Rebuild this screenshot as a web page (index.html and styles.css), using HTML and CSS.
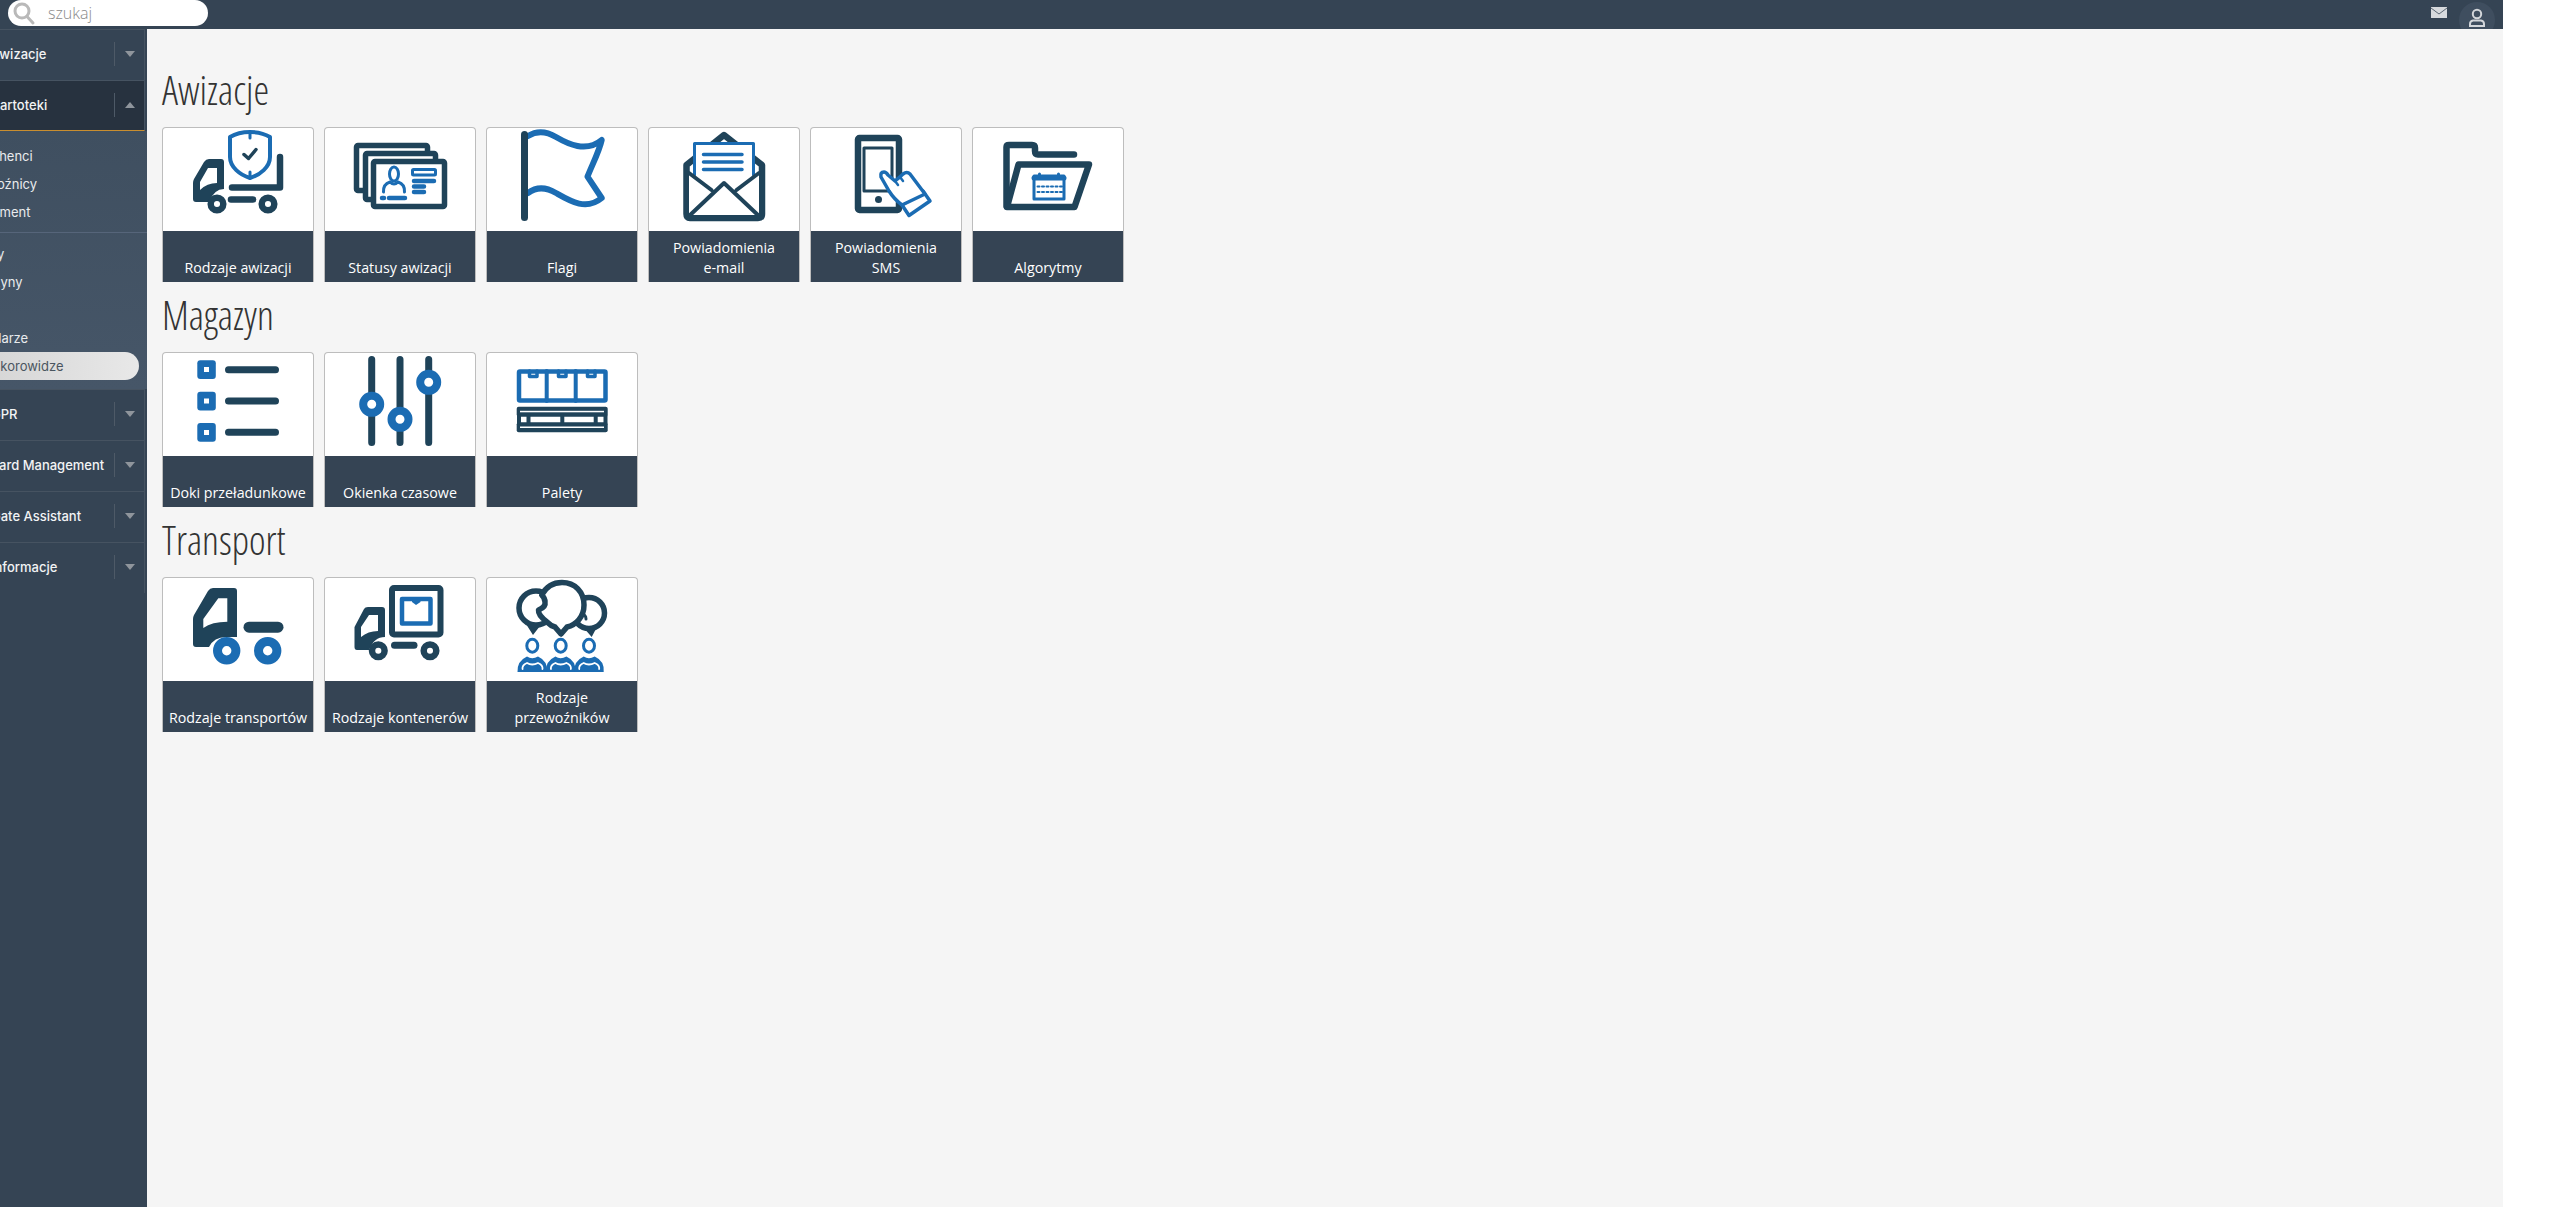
FILE: index.html
```html
<!DOCTYPE html>
<html lang="pl">

<head>
    <meta charset="UTF-8">
    <meta name="viewport" content="width=device-width, initial-scale=1.0">
    <title>Skorowidze</title>
    <link rel="stylesheet" href="styles.css">
</head>

<body>
    <div class="app">
        <header class="topbar">
            <div class="search">
                <svg class="search-icon" width="30" height="26" viewBox="0 0 30 26">
                    <circle cx="14" cy="11" r="7" />
                    <path d="M19 16.5 L25 23" />
                </svg>
                <input class="search-input" type="text" placeholder="szukaj">
            </div>
            <div class="topbar-right">
                <svg class="mail-icon" width="16" height="11" viewBox="0 0 16 11">
                    <rect width="16" height="11" />
                    <path d="M0 1 L8 7 L16 1" />
                </svg>
                <div class="avatar">
                    <svg width="20" height="20" viewBox="0 0 20 20">
                        <circle cx="10" cy="6" r="4.2" />
                        <path d="M3 18 V16 Q3 13 6 12.5 H14 Q17 13 17 16 V18 Z" />
                    </svg>
                </div>
            </div>
        </header>

        <div class="layout">
            <nav class="sidebar">
                <div class="nav-head">
                    <span class="nav-label">Awizacje</span>
                    <span class="nav-toggle"><i class="caret"></i></span>
                </div>
                <div class="nav-head active">
                    <span class="nav-label">Kartoteki</span>
                    <span class="nav-toggle"><i class="caret up"></i></span>
                </div>
                <div class="nav-sub">
                    <div class="nav-group">
                        <a class="nav-item">Kontrahenci</a>
                        <a class="nav-item">Przewoźnicy</a>
                        <a class="nav-item">Asortyment</a>
                    </div>
                    <div class="nav-group">
                        <a class="nav-item">Towary</a>
                        <a class="nav-item">Magazyny</a>
                        <a class="nav-item">Auta</a>
                        <a class="nav-item">Kalendarze</a>
                        <a class="nav-item current">Skorowidze</a>
                    </div>
                </div>
                <div class="nav-head">
                    <span class="nav-label">GPR</span>
                    <span class="nav-toggle"><i class="caret"></i></span>
                </div>
                <div class="nav-head">
                    <span class="nav-label">Yard Management</span>
                    <span class="nav-toggle"><i class="caret"></i></span>
                </div>
                <div class="nav-head">
                    <span class="nav-label">Gate Assistant</span>
                    <span class="nav-toggle"><i class="caret"></i></span>
                </div>
                <div class="nav-head">
                    <span class="nav-label">Informacje</span>
                    <span class="nav-toggle"><i class="caret"></i></span>
                </div>
            </nav>

            <main class="content">
                <section class="section">
                    <h1>Awizacje</h1>
                    <div class="tiles">
                        <a class="tile">
                            <svg class="tile-icon" viewBox="1 1 150 103">
                                <path class="df" d="M31 56 Q31 54 32 52 L42 35 Q44 32 47 32 H59 Q62 32 62 35 V62 Q52 62 47 75 H34 Q31 75 31 72Z" />
                                <path class="wf" d="M38 63 V55 L46 41 H55 V56 Q45 56 38 63Z" />
                                <path class="d" stroke-width="6.5" d="M118 30 V60.5 H70" />
                                <path class="b wf" stroke-width="4" d="M88 5 C96 5 103 7 108 10 V30 C108 40 98 48 88 51 C78 48 68 40 68 30 V10 C73 7 80 5 88 5Z" />
                                <path class="b" stroke-width="3" d="M88 5 V11 M88 45 V51" />
                                <path class="d" stroke-width="3.5" d="M82 27.5 L86.5 31.5 L94 22.5" />
                                <circle class="d" stroke-width="6.5" cx="55" cy="77" r="6.3" />
                                <circle class="d" stroke-width="6.5" cx="106" cy="77" r="6.3" />
                                <path class="d" stroke-width="6.5" d="M69 72.5 H91" />
                            </svg>
                            <span class="tile-label">Rodzaje awizacji</span>
                        </a>
                        <a class="tile">
                            <svg class="tile-icon" viewBox="1 1 150 103">
                                <rect class="d wf" stroke-width="5.5" x="32.5" y="18.5" width="71" height="45" rx="1.5" />
                                <rect class="d wf" stroke-width="5.5" x="41.5" y="26.5" width="70" height="46" rx="1.5" />
                                <rect class="d wf" stroke-width="5.5" x="49.5" y="34.5" width="71" height="45" rx="1.5" />
                                <ellipse class="b" stroke-width="3" cx="70" cy="47" rx="4.5" ry="7" />
                                <path class="b" stroke-width="3" d="M59.5 65 C59 58 63 56 66 55 Q70 59 74 55 C77 56 81 58 80.5 65" />
                                <rect class="b" stroke-width="3" x="88.5" y="42.5" width="23" height="5.5" rx="1" />
                                <path class="b" stroke-width="4.5" d="M90 54 H110 M90 59.5 H100 M90 65 H100 M58 71 H60 M65 71 H81" />
                            </svg>
                            <span class="tile-label">Statusy awizacji</span>
                        </a>
                        <a class="tile">
                            <svg class="tile-icon" viewBox="1 1 150 103">
                                <path class="b" stroke-width="6" d="M42 9 C50 4 60 4 70 10 C82 17 100 26 115.7 13 C113 25 106 38 101.5 49.7 L115.7 71 C100 84 84 74 70 66 C60 60 50 60 42 66" />
                                <path class="d" stroke-width="7" d="M38.5 7.5 V90.5" />
                            </svg>
                            <span class="tile-label">Flagi</span>
                        </a>
                        <a class="tile">
                            <svg class="tile-icon" viewBox="1 1 150 103">
                                <path class="d" stroke-width="6.5" d="M38.5 87 Q38.5 91 42 91 H110 Q114 91 114 87 V38 L76 8 L38.5 38 Z" />
                                <path class="b wf" stroke-width="3" d="M46.5 48 V16.5 H105.5 V48" />
                                <path class="b" stroke-width="3.5" stroke-linecap="butt" d="M55.5 27.5 H94 M55.5 35 H94 M55.5 42.5 H94" />
                                <path class="wf" d="M41 46 L76 70 L111 46 V88 H41Z" />
                                <path class="d" stroke-width="4" d="M40 90 L76 56 L112 90 M41 46 L63.5 63 M111 46 L88.5 63" />
                            </svg>
                            <span class="tile-label">Powiadomienia<br>e-mail</span>
                        </a>
                        <a class="tile">
                            <svg class="tile-icon" viewBox="1 1 150 103">
                                <rect class="d" stroke-width="6.5" x="48" y="11" width="41" height="72" rx="1.5" />
                                <rect class="d" stroke-width="3" x="54" y="21" width="28" height="43" />
                                <circle class="df" cx="68.5" cy="72.5" r="3.5" />
                                <path class="b wf" stroke-width="3.5" d="M92 78 L113 64 L120 74 L99 88.5Z" />
                                <path class="b wf" stroke-width="3.5" d="M71 50 Q70 45 74 45 Q76 45 78 48 L85 54 Q90 50 93 47 Q97 44 100 47 L115 67 L92 78 Q84 72 79 64Z" />
                                <path class="b" stroke-width="2.5" d="M85 54 L88 58 M90 50 L93 54" />
                            </svg>
                            <span class="tile-label">Powiadomienia<br>SMS</span>
                        </a>
                        <a class="tile">
                            <svg class="tile-icon" viewBox="1 1 150 103">
                                <path class="d" stroke-width="6.5" d="M34.5 79 V20 Q34.5 18 37 18 H60 Q63 18 63 21 V24 Q63 27.5 66 27.5 H102" />
                                <path class="d wf" stroke-width="6.5" d="M46.5 37.5 H117 L102.5 80 H35 Z" />
                                <rect class="b" stroke-width="3" x="62" y="49" width="30" height="23" />
                                <path class="b" stroke-width="5" stroke-linecap="butt" d="M62 51 H92" />
                                <path class="b" stroke-width="3" d="M67.5 47 V50 M86.5 47 V50" />
                                <path class="b" stroke-width="2" stroke-linecap="butt" stroke-dasharray="2 2.5" d="M65.5 59.5 H90 M65.5 65 H90" />
                            </svg>
                            <span class="tile-label">Algorytmy</span>
                        </a>
                    </div>
                </section>

                <section class="section">
                    <h1>Magazyn</h1>
                    <div class="tiles">
                        <a class="tile">
                            <svg class="tile-icon" viewBox="1 1 150 103">
                                <rect class="bf" x="35.3" y="8.3" width="18.5" height="18.7" rx="3" />
                                <rect class="bf" x="35.3" y="39.7" width="18.5" height="18.7" rx="3" />
                                <rect class="bf" x="35.3" y="71" width="18.5" height="18.7" rx="3" />
                                <rect class="wf" x="42" y="15" width="5" height="5" />
                                <rect class="wf" x="42" y="46.5" width="5" height="5" />
                                <rect class="wf" x="42" y="78" width="5" height="5" />
                                <path class="d" stroke-width="7" d="M66.5 17.7 H113.5 M66.5 49 H113.5 M66.5 80.3 H113.5" />
                            </svg>
                            <span class="tile-label">Doki przeładunkowe</span>
                        </a>
                        <a class="tile">
                            <svg class="tile-icon" viewBox="1 1 150 103">
                                <path class="d" stroke-width="7" d="M47.7 7.5 V90.5 M76 7.5 V90.5 M104.7 7.5 V90.5" />
                                <circle class="b wf" stroke-width="8" cx="47.7" cy="52.3" r="8.5" />
                                <circle class="b wf" stroke-width="8" cx="76" cy="67.3" r="8.5" />
                                <circle class="b wf" stroke-width="8" cx="104.7" cy="30.3" r="8.5" />
                            </svg>
                            <span class="tile-label">Okienka czasowe</span>
                        </a>
                        <a class="tile">
                            <svg class="tile-icon" viewBox="1 1 150 103">
                                <rect class="b" stroke-width="4.5" x="33" y="19.5" width="86.5" height="29" rx="1" />
                                <path class="b" stroke-width="4" stroke-linecap="butt" d="M60.7 19 V49 M89.7 19 V49" />
                                <path class="b" stroke-width="3.5" stroke-linecap="butt" d="M43.5 19 V24.5 H51 V19 M72.5 19 V24.5 H80 V19 M101.5 19 V24.5 H109 V19" />
                                <rect class="df" x="30.7" y="54.7" width="91" height="10" rx="2" />
                                <rect class="df" x="30.7" y="70.3" width="91" height="10" rx="2" />
                                <rect class="wf" x="34" y="58.8" width="84" height="1.5" />
                                <rect class="wf" x="34" y="74.5" width="84" height="1.5" />
                                <path class="d" stroke-width="4" stroke-linecap="butt" d="M33 64 V71 M42.5 64 V71 M76.3 64 V71 M109.7 64 V71 M119.5 64 V71" />
                            </svg>
                            <span class="tile-label">Palety</span>
                        </a>
                    </div>
                </section>

                <section class="section">
                    <h1>Transport</h1>
                    <div class="tiles">
                        <a class="tile">
                            <svg class="tile-icon" viewBox="1 1 150 103">
                                <path class="df" d="M31 42 Q31 40 32 38 L46 14 Q48 11 51 11 H72 Q75 11 75 14 V60 H64 Q52 60 47 70 H34 Q31 70 31 67Z" />
                                <path class="wf" d="M41.3 51 V42 L56.3 21.3 H65.3 V44.7 Q50 44.7 41.3 51Z" />
                                <path class="d" stroke-width="11" d="M87 50.2 H116" />
                                <circle class="b wf" stroke-width="9" cx="64.7" cy="73.7" r="9.2" />
                                <circle class="b wf" stroke-width="9" cx="105.7" cy="73.7" r="9.2" />
                            </svg>
                            <span class="tile-label">Rodzaje transportów</span>
                        </a>
                        <a class="tile">
                            <svg class="tile-icon" viewBox="1 1 150 103">
                                <path class="df" d="M30.5 50 L40 32 Q41 30 44 30 H58 Q61 30 61 33 V60 Q50 60 45 73 H33 Q30.5 73 30.5 70Z" />
                                <path class="wf" d="M37 60 V50 L45 38 H54 V54 Q44 54 37 60Z" />
                                <rect class="d" stroke-width="6" x="68" y="11" width="48.5" height="46.5" rx="2" />
                                <rect class="b" stroke-width="4.5" x="78" y="22" width="28.5" height="24.5" />
                                <path class="bf" d="M88 22 H96.5 V25 L92 28 L88 25Z" />
                                <circle class="d" stroke-width="6.5" cx="54.3" cy="73.7" r="6.3" />
                                <circle class="d" stroke-width="6.5" cx="106" cy="73.7" r="6.3" />
                                <path class="d" stroke-width="7" d="M70.5 68.3 H90" />
                            </svg>
                            <span class="tile-label">Rodzaje kontenerów</span>
                        </a>
                        <a class="tile">
                            <svg class="tile-icon" viewBox="1 1 150 103">
                                <path class="df" d="M40 47 L47 58 L54 49Z M97 50 L105.7 60 L112 48Z" />
                                <circle class="d wf" stroke-width="5.5" cx="50" cy="31" r="17" />
                                <circle class="d wf" stroke-width="5.5" cx="103" cy="36" r="15.5" />
                                <path class="d wf" stroke-width="5.5" d="M76 5.5 C89 5.5 98 15 98 28 C98 40 90 48 81 50 L75 57 L69 50 C65 49 63 47 60.7 44.7 Q52 38 52.5 33 Q60 30 59 25 Q59 21 55.7 18 C60 10 67 5.5 76 5.5Z" />
                                <path class="d" stroke-width="3" d="M95 38 Q100 37 100 42" />
                                <g id="crew">
                                    <ellipse class="b" stroke-width="3" cx="46.3" cy="68.7" rx="5.5" ry="6.5" />
                                    <path class="bf" d="M31.5 95 Q31 84 41 79.5 Q46 83 52 79.5 Q62 84 61 95Z" />
                                    <path class="w" stroke-width="1.8" d="M36.5 92 Q36 88 41 86 Q46 89 52 86 Q57 88 56.5 92" />
                                </g>
                                <use href="#crew" x="28.4" />
                                <use href="#crew" x="56.7" />
                            </svg>
                            <span class="tile-label">Rodzaje<br>przewoźników</span>
                        </a>
                    </div>
                </section>
            </main>
        </div>
    </div>
</body>

</html>
```

FILE: styles.css
```css
body {
    margin: 0;
    background: #fff;
    font-family: "Open Sans", Arial, sans-serif;
}

.app {
    width: 2503px;
    height: 1207px;
    display: flex;
    flex-direction: column;
    overflow: hidden;
}

/* top bar */
.topbar {
    height: 29px;
    flex: none;
    display: flex;
    justify-content: space-between;
    padding: 0 8px;
    background: #354454;
    overflow: hidden;
}

.search {
    width: 200px;
    height: 26px;
    display: flex;
    align-items: center;
    background: #fff;
    border-radius: 13px;
}

.search-icon {
    flex: none;
    margin-left: 0;
    fill: none;
    stroke: #b9b9b9;
    stroke-width: 3;
    stroke-linecap: round;
}

.search-input {
    width: 150px;
    margin-left: 10px;
    padding: 0;
    border: none;
    outline: none;
    background: none;
    font-family: "Open Sans", Arial, sans-serif;
    font-size: 16px;
    font-weight: 300;
}

.search-input::placeholder {
    color: #8a8a8a;
    opacity: 1;
}

.topbar-right {
    display: flex;
    gap: 12px;
}

.mail-icon {
    margin-top: 7px;
}

.mail-icon rect {
    fill: #d6d9dd;
}

.mail-icon path {
    fill: none;
    stroke: #5a6672;
    stroke-width: 1;
}

.avatar {
    width: 36px;
    height: 36px;
    margin-top: 2px;
    display: flex;
    justify-content: center;
    padding-top: 6px;
    box-sizing: border-box;
    border-radius: 50%;
    background: #3f4e5f;
}

.avatar svg {
    fill: none;
    stroke: #d3d6da;
    stroke-width: 2;
}

/* sidebar */
.layout {
    flex: 1;
    display: flex;
    min-height: 0;
}

.sidebar {
    width: 147px;
    flex: none;
    background: #354454;
    overflow: hidden;
    font-family: Inter, Arial, sans-serif;
    font-size: 13px;
}

.nav-head {
    height: 51px;
    box-sizing: border-box;
    margin-right: 2px;
    padding-bottom: 2px;
    display: flex;
    align-items: center;
    justify-content: space-between;
    border-top: 1px solid #465361;
    border-right: 1px solid #465361;
    color: #f2f3f4;
    font-weight: 500;
    white-space: nowrap;
}

.nav-head.active {
    background: #27323f;
    border-bottom: 1px solid #c98e2f;
}

.nav-label {
    margin-left: -9px;
}

.nav-toggle {
    width: 29px;
    height: 24px;
    flex: none;
    display: flex;
    align-items: center;
    justify-content: center;
    border-left: 1px solid #4e5a67;
}

.caret {
    width: 0;
    height: 0;
    border-left: 5px solid transparent;
    border-right: 5px solid transparent;
    border-top: 6px solid #8f959c;
}

.caret.up {
    border-top: none;
    border-bottom: 6px solid #8f959c;
}

.nav-sub {
    height: 258px;
    box-sizing: border-box;
    background: linear-gradient(#3f4f60, #465668);
}

.nav-group {
    padding: 11px 0 6px;
    border-bottom: 1px solid #56657a;
}

.nav-group:last-child {
    padding-top: 7px;
    border-bottom: none;
}

.nav-item {
    display: block;
    height: 28px;
    line-height: 28px;
    margin-left: -41px;
    color: #e9ebed;
    white-space: nowrap;
}

.nav-item.current {
    width: 180px;
    height: 28px;
    box-sizing: border-box;
    padding-left: 33px;
    border-radius: 14px;
    background: linear-gradient(90deg, #d2d2d2, #e8e8e8);
    color: #4a5560;
}

/* content */
.content {
    flex: 1;
    padding: 28px 0 0 15px;
    background: #f5f5f5;
}

.section {
    height: 225px;
}

h1 {
    height: 60px;
    margin: 0 0 10px;
    color: #333;
    font-size: 39.5px;
    font-weight: 300;
    font-stretch: 75%;
    line-height: 66px;
}

.tiles {
    display: flex;
    gap: 10px;
}

.tile {
    width: 152px;
    height: 155px;
    box-sizing: border-box;
    display: flex;
    flex-direction: column;
    background: #fff;
    border: 1px solid #bdbdbd;
    border-bottom: none;
    border-radius: 4px 4px 0 0;
}

.tile-icon {
    width: 150px;
    height: 103px;
    flex: none;
}

.tile-label {
    flex: 1;
    display: flex;
    align-items: flex-end;
    justify-content: center;
    padding-bottom: 4px;
    background: #354454;
    color: #fff;
    font-size: 14.25px;
    line-height: 20px;
    text-align: center;
}

/* icon paint */
.d {
    fill: none;
    stroke: #1f4359;
    stroke-linecap: round;
    stroke-linejoin: round;
}

.b {
    fill: none;
    stroke: #1b6cb3;
    stroke-linecap: round;
    stroke-linejoin: round;
}

.w {
    fill: none;
    stroke: #fff;
    stroke-linecap: round;
}

.df {
    fill: #1f4359;
}

.bf {
    fill: #1b6cb3;
}

.wf {
    fill: #fff;
}
```
